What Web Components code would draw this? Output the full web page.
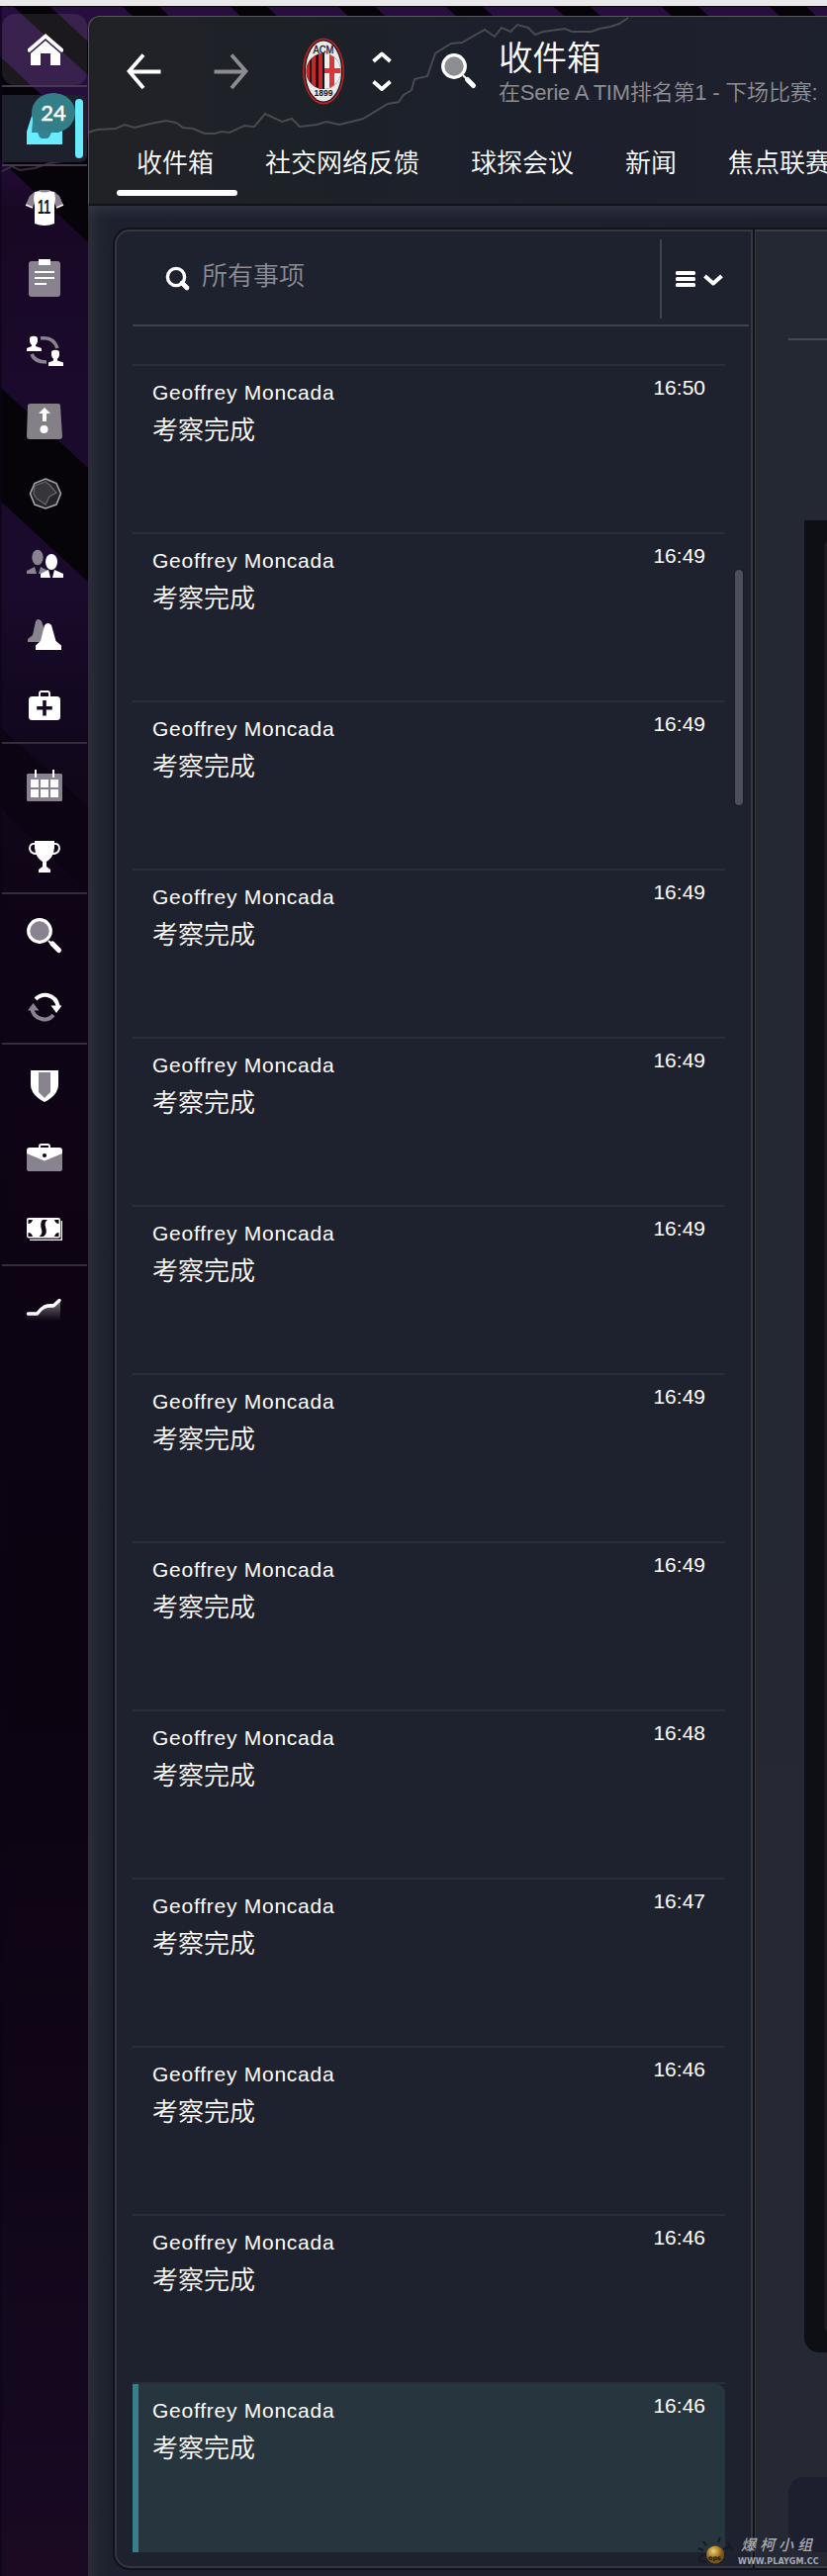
<!DOCTYPE html>
<html lang="zh-CN">
<head>
<meta charset="utf-8">
<title>收件箱</title>
<style>
html,body{margin:0;padding:0;background:#0e0415}
body{width:836px;height:2604px;overflow:hidden;font-family:"Liberation Sans","Noto Sans CJK SC",sans-serif;color:#fff}
</style>
</head>
<body>
<fm-app></fm-app>
<script>
const define = (name, html, setup) => customElements.define(name, class extends HTMLElement {
  connectedCallback() {
    if (this.shadowRoot) return;
    const root = this.attachShadow({mode: 'open'});
    root.innerHTML = typeof html === 'function' ? html(this) : html;
    if (setup) setup(this, root);
  }
});

const G = '#89838f';
const icons = {
  home: `<path d="M31 66V53L46 40 61 53V66H51V54H41V66Z" fill="#fff"/><path d="M46 38 62.500 52" stroke="#33204a" stroke-width="0"/><path d="M28 49.500 46 34 64 49.500V52L62 53 46 39 30 53 28 52Z" fill="#fff"/><path d="M30 54 46 40.300 62 54" fill="none" stroke="#33204a" stroke-width="1.300"/>`,
  shirt: `<path d="M35 194 30 198 26 207 33 210 36 203ZM55 194 60 198 64 207 57 210 54 203Z" fill="${G}"/><path d="M26 207 33 210M64 207 57 210" stroke="#fff" stroke-width="1.5"/><path d="M35 194Q45 191 55 194L56 201 55 207V226Q45 230 35 226V207L34 201Z" fill="#fff"/><path d="M39 193Q45 196 51 193L50 192H40Z" fill="${G}"/><text x="38" y="216" font-family="Liberation Sans" font-weight="700" font-size="20" textLength="13" lengthAdjust="spacingAndGlyphs" fill="#1a1020">11</text>`,
  clipboard: `<rect x="29" y="264" width="32" height="36" rx="3" fill="${G}"/><path d="M39 262h12v6H39zM35 274h20v2H35zM35 280h20v2H35zM35 286h12v2H35z" fill="#fff"/>`,
  swap: `<path d="M41 342Q54 340 58 352M32 358Q35 366 47 366" fill="none" stroke="${G}" stroke-width="3.6"/><g fill="#fff"><path d="M27 355V352L32 350V348C28 340 31 340 34 340S40 340 36 348V350L42 352V355Z"/><ellipse cx="34" cy="344.500" rx="4" ry="4.800"/><path d="M49 370V366.500L54 364.500V362C50 354 53 354 56 354S62 354 58 362V364.500L64 366.500V370Z"/><ellipse cx="56" cy="358.500" rx="4" ry="4.800"/></g>`,
  tactic: `<path d="M31 408H59Q61 408 61 410L63 441Q63 444 60 444H30Q27 444 27 441L28 410Q28 408 31 408Z" fill="#858087"/><path d="M45 412 51 418H47V426H43V418H39Z" fill="#fff"/><circle cx="44.500" cy="434" r="4" fill="#fff"/>`,
  badge: `<path d="M46 484 57 488.500 61.500 499 57 510 46 514 35 510 30.500 499 35 488.500Z" fill="#242328" stroke="#a6a6a9" stroke-width="1.600"/><path d="M35 491 46 487 51 491 57 498 50 502 46 510 37 504 34 499Z" fill="#363539" stroke="#66656a" stroke-width="1.300"/>`,
  people: `<g fill="${G}"><ellipse cx="38" cy="563.500" rx="5.700" ry="7.700"/><path d="M27 580V577L35 573 37 580ZM39 580 41 573 49 577V580Z"/></g><g fill="#fff"><ellipse cx="52" cy="568" rx="6" ry="8"/><path d="M41 584V580L49 576 51 584ZM53 584 55 576 64 580V584Z"/></g>`,
  cones: `<path d="M36 628Q38.500 624 42 628L44 634V649H28V646L33 642Z" fill="${G}"/><path d="M45 632Q48.500 628 52 632L56.500 648 62 652.500V657H36V652.500L41 648Z" fill="#fff"/>`,
  medkit: `<rect x="29" y="704" width="32" height="24" rx="3.500" fill="#fff"/><path d="M40 705V701Q40 699 42 699H48Q50 699 50 701V705" fill="none" stroke="#fff" stroke-width="1.800"/><path d="M43.200 708h3.600v6h6v3.600h-6v6h-3.600v-6h-6v-3.600h6z" fill="#170a24"/>`,
  calendar: `<rect x="27" y="782" width="36" height="28" rx="1.500" fill="${G}"/><path d="M35 778h2v8h-2zM53 778h2v8h-2zM31 788h8v8h-8zM41 788h8v8h-8zM51 788h8v8h-8zM31 798h8v8h-8zM41 798h8v8h-8zM51 798h8v8h-8z" fill="#fff"/>`,
  trophy: `<path d="M35 850H55V857Q54 867 47 871V876L51 879V882H39V879L43 876V871Q36 867 35 857Z" fill="#fff"/><path d="M36 853Q30 852 30 858 31 863 37 863M54 853Q60 852 60 858 59 863 53 863" fill="none" stroke="#fff" stroke-width="1.900"/>`,
  search: `<circle cx="40" cy="941" r="11.300" fill="${G}" stroke="#fff" stroke-width="3.200"/><path d="M49 951 53 955" stroke="#fff" stroke-width="2"/><path d="M53 954 59.500 960.500" stroke="#fff" stroke-width="5.200" stroke-linecap="round"/>`,
  refresh: `<path d="M36 1010Q41 1005 48 1006 57 1008 59 1018" fill="none" stroke="#fff" stroke-width="4"/><path d="M51.500 1016.500H62.500L57 1024Z" fill="#fff"/><path d="M54 1026Q49 1032 42 1030 33 1028 32 1018" fill="none" stroke="${G}" stroke-width="4"/><path d="M28 1021.500H39.500L33.500 1014Z" fill="${G}"/>`,
  shield: `<path d="M31 1082H59V1096Q59 1107 45 1114 31 1107 31 1096Z" fill="#fff"/><path d="M39 1084H51V1104L45 1110 39 1104Z" fill="${G}"/>`,
  briefcase: `<path d="M40 1161V1158.500Q40 1157 42 1157H48Q50 1157 50 1158.500V1161" fill="none" stroke="#fff" stroke-width="1.800"/><path d="M27 1163H63V1182Q63 1184 60 1184H30Q27 1184 27 1182Z" fill="${G}"/><path d="M30 1160H60Q63 1160 63 1163V1166L45 1173.500 27 1166V1163Q27 1160 30 1160Z" fill="#fff"/><circle cx="45" cy="1168" r="2.100" fill="#140a1a"/>`,
  money: `<path d="M30 1253.400H62.300V1234" fill="none" stroke="#fff" stroke-width="1.300"/><rect x="27" y="1231" width="34" height="20.600" rx="2" fill="#fff"/><path d="M28.500 1233H33Q32 1237 28.500 1237ZM59.500 1233H55Q56 1237 59.500 1237ZM28.500 1250H33Q32 1246 28.500 1246ZM59.500 1250H55Q56 1246 59.500 1246ZM43 1233H48Q44.500 1236 46 1240 48.500 1247 44 1250H39.500Q43.500 1247 42 1243 40 1236 43 1233Z" fill="#140a1a"/>`,
  chart: `<defs><linearGradient id="g" x2="0" y2="1"><stop stop-color="#77717d"/><stop offset="1" stop-color="#77717d" stop-opacity="0"/></linearGradient></defs><path d="M27 1328H37L45 1321H54L61 1314V1335H27Z" fill="url(#g)"/><path d="M28.500 1328H37.500Q41 1323 45 1321 49 1319.500 54 1320L60 1314.500" fill="none" stroke="#fff" stroke-width="3.500" stroke-linecap="round" stroke-linejoin="round"/>`
};

define('fm-nav-icon', el => `<style>:host{display:block;height:72px;width:89px}svg{display:block}</style>
<svg width="89" height="72" viewBox="0 ${el.getAttribute('top')} 89 72">${icons[el.getAttribute('name')]}</svg>`);

define('fm-nav-group', `<style>:host{display:block;padding-top:6px}:host::after{content:"";display:block;height:2px;width:86px;margin-left:2px;background:#352d3b}:host([last])::after{display:none}</style><slot></slot>`);

define('fm-sidebar', `<style>
:host{display:block;width:89px;padding-top:8px}
.home{margin-left:2px;width:86px;height:72px;border-radius:13px;background:rgba(255,255,255,.085)}
.home fm-nav-icon{margin-left:-2px}
.line{height:2px;width:86px;margin-left:2px;background:#443a4c}
.inbox{position:relative;margin:8px 0 2px 2px;width:86px;height:68px;border-radius:0 7px 7px 0;background:#1d202d}
.inbox svg{display:block}
.count{position:absolute;left:30px;top:-2px;width:44px;height:40px;border-radius:22px/20px;background:#347f87;text-align:center;font:500 22px/40px Lato,"Liberation Sans",sans-serif;-webkit-text-stroke:.4px #fff;color:#fff}
.active{position:absolute;left:74px;top:4px;width:8px;height:60px;border-radius:4px;background:#68ebff}
</style>
<div class="home"><fm-nav-icon name="home" top="14"></fm-nav-icon></div>
<div class="line"></div>
<div class="inbox"><svg width="86" height="68" viewBox="2 96 86 68"><path d="M33 114H58L63 133V146H27V133Z" fill="#68ebff"/><path d="M34 112H57L60 134H52L50 138Q49 140 47 140H43Q40 140 39 136L38 134H32Z" fill="#347f91"/></svg><div class="count">24</div><div class="active"></div></div>
<div class="line"></div>
<fm-nav-group>${['shirt','clipboard','swap','tactic','badge','people','cones','medkit'].map((n,i)=>`<fm-nav-icon name="${n}" top="${174+i*72}"></fm-nav-icon>`).join('')}</fm-nav-group>
<fm-nav-group><fm-nav-icon name="calendar" top="758"></fm-nav-icon><fm-nav-icon name="trophy" top="830"></fm-nav-icon></fm-nav-group>
<fm-nav-group><fm-nav-icon name="search" top="910"></fm-nav-icon><fm-nav-icon name="refresh" top="982"></fm-nav-icon></fm-nav-group>
<fm-nav-group><fm-nav-icon name="shield" top="1062"></fm-nav-icon><fm-nav-icon name="briefcase" top="1134"></fm-nav-icon><fm-nav-icon name="money" top="1206"></fm-nav-icon></fm-nav-group>
<fm-nav-group last><fm-nav-icon name="chart" top="1286"></fm-nav-icon></fm-nav-group>`);

define('fm-tab', `<style>:host{display:flex;flex:none;flex-direction:column;align-items:center;position:relative;padding:0 26px;font-size:26px;line-height:40px;font-weight:350;white-space:nowrap}
:host([active])::after{content:"";position:absolute;left:6px;right:2px;top:47px;height:6px;border-radius:3px;background:#fff}</style><slot></slot>`);

define('fm-crest', `<style>:host{display:block;width:44px;height:70px}svg{display:block}</style>
<svg width="44" height="70" viewBox="305 37 44 70"><defs><clipPath id="c"><ellipse cx="327" cy="72" rx="17.500" ry="18"/></clipPath></defs>
<ellipse cx="327" cy="72" rx="21" ry="33.500" fill="#b92325"/><ellipse cx="327" cy="72" rx="19.300" ry="31.700" fill="#17151a"/><ellipse cx="327" cy="72" rx="18" ry="30.500" fill="#e9e9ea"/>
<g clip-path="url(#c)"><rect x="308" y="53" width="38" height="38" fill="#17151a"/><path d="M310 53h3v38h-3zM315 53h4v38h-4zM322 53h4v38h-4z" fill="#c5282b"/><path d="M328 53h18v38h-18z" fill="#eee"/><path d="M333 53h5v38h-5zM328 69h18v5h-18z" fill="#dc3639"/></g>
<text x="316.500" y="53.500" font-family="Liberation Sans" font-size="11" textLength="21" lengthAdjust="spacingAndGlyphs" fill="#151519" stroke="#151519" stroke-width=".3">ACM</text>
<text x="317.500" y="96.500" font-family="Liberation Sans" font-weight="700" font-size="8.500" textLength="19" lengthAdjust="spacingAndGlyphs" fill="#151519">1899</text></svg>`);

define('fm-header', `<style>
:host{display:block;box-sizing:border-box;position:relative;height:192px;border-top:1px solid #58595d;border-left:1px solid #58595d;border-top-left-radius:12px;background:linear-gradient(90deg,#212226,#1c2129 35%,#1d202c 65%,#1d212d);border-bottom:2px solid #121318;overflow:hidden}
.graph{position:absolute;left:-1px;top:-1px}
.bar{position:relative;display:flex;height:128px;align-items:flex-start}
.nav{display:block;flex:none}
fm-crest{margin:20px 0 0 0;flex:none}
.titles{margin-left:14px;white-space:nowrap}
h1{margin:19px 0 0;font-size:34.500px;line-height:46px;font-weight:350}
p{margin:0;font-size:22px;line-height:24px;color:#8d8e93;font-weight:350;letter-spacing:-.2px}
nav{position:relative;display:flex;margin-left:22px;width:724px;overflow:visible}
</style>
<svg class="graph" width="747" height="192" viewBox="89 16 747 192"><path d="M89 134 98 131 117 130 126 126 136 129 148 126 157 124 168 122 178 124 185 129 195 130 207 135H217L224 133 232 134 247 127 257 128 268 115 285 123 295 120 303 128 320 126 330 123 343 126 367 120 392 105 403 103 408 96 416 91 419 80 432 77 440 54 456 44 467 43 490 30 500 37 507 28 516 32 523 25 534 28 541 35 549 32 571 29 578 32H598L606 29 617 27 626 24 635 18" fill="none" stroke="#484a50" stroke-width="2"/></svg>
<div class="bar">
<svg class="nav" width="215" height="110" viewBox="90 17 215 110"><path d="M145 55.500 130.500 72 145 89M131 72.500H162.500" fill="none" stroke="#fff" stroke-width="3.800"/><path d="M234 55.500 248.500 72 234 89M248 72.500H216.500" fill="none" stroke="#8c8d91" stroke-width="3.800"/></svg>
<fm-crest></fm-crest>
<svg class="nav" width="141" height="110" viewBox="349 17 141 110"><path d="M377.500 62 386 54.500 394.500 62M377.500 82.500 386 90 394.500 82.500" fill="none" stroke="#fff" stroke-width="3.800" stroke-linejoin="round"/><circle cx="459" cy="67" r="11.300" fill="#8d8e93" stroke="#fff" stroke-width="3.200"/><path d="M468 76 473 81" stroke="#fff" stroke-width="2"/><path d="M472.500 80.500 478.500 86.500" stroke="#fff" stroke-width="5" stroke-linecap="round"/></svg>
<div class="titles"><h1>收件箱</h1><p>在Serie A TIM排名第1 - 下场比赛:</p></div>
</div>
<nav><fm-tab active>收件箱</fm-tab><fm-tab>社交网络反馈</fm-tab><fm-tab>球探会议</fm-tab><fm-tab>新闻</fm-tab><fm-tab>焦点联赛</fm-tab></nav>`);

define('fm-message', `<style>
:host{display:block;box-sizing:border-box;height:170px;width:599px;border-top:2px solid #2a2d3a}
article{display:flex;justify-content:space-between;box-sizing:border-box;height:168px;padding:7px 20px 0;font-size:21px}
:host([selected]) article{height:170px;background:#27353e;border-radius:0 9px 0 0;border-left:6px solid #36808a;padding-left:14px}
:host([selected]){height:172px}
.name{line-height:26px;margin-top:7px;letter-spacing:.75px}
.subject{font-size:26px;line-height:38px;margin-top:6px;font-weight:350}
time{line-height:26px;margin-top:2px}
</style><article><div><div class="name"><slot name="from"></slot></div><div class="subject"><slot></slot></div></div><time><slot name="time"></slot></time></article>`);

define('fm-search', `<style>
:host{display:flex;box-sizing:border-box;align-items:center;height:96px;border-bottom:2px solid #3f424d;width:623px}
svg{display:block;flex:none}
.q{font-size:26px;line-height:40px;color:#8b8d93;font-weight:350;flex:1;margin-top:-5px}
.sep{width:2px;height:80px;background:#41434e;align-self:flex-start;margin-top:8px}
</style><svg width="70" height="94" viewBox="134 234 70 94"><circle cx="178" cy="280" r="8.600" fill="none" stroke="#fff" stroke-width="3.400"/><path d="M184 286 189 291" stroke="#fff" stroke-width="4.600" stroke-linecap="round"/></svg>
<div class="q">所有事项</div><div class="sep"></div>
<svg width="88" height="94" viewBox="669 234 88 94"><g fill="#fff"><rect x="683" y="274" width="20" height="4" rx="1.500"/><rect x="683" y="280" width="20" height="4" rx="1.500"/><rect x="683" y="286" width="20" height="4" rx="1.500"/></g><path d="M712.500 279 721 286.500 729.500 279" fill="none" stroke="#fff" stroke-width="4" stroke-linejoin="round"/></svg>`);

const times = ['16:50','16:49','16:49','16:49','16:49','16:49','16:49','16:49','16:48','16:47','16:46','16:46','16:46'];
define('fm-inbox', `<style>
:host{display:block;position:relative;box-sizing:border-box;flex:none;width:645px;height:2364px;background:#1e212e;border:2px solid #343742;border-top-left-radius:15px;border-bottom-left-radius:15px;box-shadow:0 0 0 2px #111319;padding-left:16px;margin:2px 0 0 2px}
.list{display:flex;flex-direction:column;margin-top:38px}
.scroll{position:absolute;left:625px;top:342px;width:8px;height:238px;border-radius:4px;background:#4d4f5a;box-shadow:0 0 0 1px #191b27}
</style><fm-search></fm-search><div class="list">${times.map((t,i)=>`<fm-message ${i===12?'selected':''}><span slot="from">Geoffrey Moncada</span>考察完成<span slot="time">${t}</span></fm-message>`).join('')}</div><div class="scroll"></div>`);

define('fm-reader', `<style>
:host{display:block;box-sizing:border-box;flex:1;height:2364px;margin:2px 0 0 0;background:linear-gradient(#242832,#242832 30%,#262933);border-top:2px solid #3b3e47;border-bottom:2px solid #3b3e47;border-left:1px solid #353841;box-shadow:0 0 0 2px #111319;overflow:hidden}
.line{height:2px;background:#464852;margin:108px 0 0 33px}
.body{box-sizing:border-box;height:1852px;margin:182px 0 126px 49px;background:#0e0f14;border-bottom-left-radius:15px;padding:22px 0 22px 20px}
.body i{display:block;height:100%;background:#1b1a1e;border-radius:9px 0 0 9px}
.foot{height:76px;margin-left:33px;border-radius:16px 0 0 16px;background:#1d1f2e}
</style><div class="line"></div><div class="body"><i></i></div><div class="foot"></div>`);

define('fm-watermark', `<style>
:host{position:absolute;left:704px;top:2562px;width:126px;height:32px;display:flex;color:#a9aab2}
svg{flex:none}
div{margin-left:2px;white-space:nowrap}
b{display:block;font:italic 500 15px/20px "Noto Sans CJK SC",sans-serif;letter-spacing:4px;margin-left:3px}
small{display:block;font:700 8px/10px "DejaVu Sans",sans-serif;width:81px;letter-spacing:.1px;margin-top:3px}
</style><svg width="40" height="32" viewBox="704 2562 40 32"><defs><radialGradient id="b" cx=".4" cy=".3"><stop stop-color="#ddd394"/><stop offset=".5" stop-color="#c2932f"/><stop offset="1" stop-color="#7e561b"/></radialGradient></defs><path d="M711 2569 714 2573M728 2565 726 2570M706 2576 711 2578M731 2577 739 2574M735 2570 740 2577M714 2582Q706 2583 707 2588 709 2591 715 2589" fill="none" stroke="#151a22" stroke-width="2"/><circle cx="723" cy="2582.500" r="9" fill="url(#b)"/><text x="716" y="2588" font-family="DejaVu Sans" font-weight="700" font-size="6.500" fill="#151515">ops</text></svg><div><b>爆柯小组</b><small>WWW.PLAYGM.CC</small></div>`);

define('fm-app', `<style>
:host{display:block;position:relative;width:836px;height:2604px;overflow:hidden;background:#e9e9e9;padding-top:6px;box-sizing:border-box}
.bg{position:absolute;left:0;top:6px}
.shell{position:relative;display:grid;grid-template-columns:89px 1fr;height:2598px}
main{padding-top:10px;min-width:0}
.content{display:flex;gap:2px;height:2396px;box-sizing:border-box;padding:22px 0 0 25px;background:linear-gradient(rgba(54,58,74,.55),transparent 14px),linear-gradient(90deg,#2b2e38,#20242f 11px,#1d202e 25px,#1d1f2d)}
</style>
<svg class="bg" width="836" height="2598" viewBox="0 6 836 2598"><defs><linearGradient id="p" gradientUnits="userSpaceOnUse" x1="0" y1="6" x2="0" y2="2604"><stop stop-color="#270e3e"/><stop offset=".05" stop-color="#260e3d"/><stop offset=".08" stop-color="#180825"/><stop offset=".16" stop-color="#1b0a2c"/><stop offset=".23" stop-color="#1a0a2b"/><stop offset=".27" stop-color="#130820"/><stop offset=".31" stop-color="#110719"/><stop offset=".36" stop-color="#0e0415"/><stop offset=".65" stop-color="#0c0311"/><stop offset=".83" stop-color="#100618"/><stop offset=".96" stop-color="#160921"/><stop offset="1" stop-color="#1b0a22"/></linearGradient></defs>
<rect y="6" width="836" height="2598" fill="url(#p)"/>
<path d="M14 7H51L89 42V76ZM0 57 89 140V245L0 161ZM0 391 89 473V588L0 506Z" fill="#060309"/><path d="M0 735 89 815V900L0 818Z" fill="#0c0412"/>
<path d="M123 6h37l11 10h-37zM232 6h37l11 10h-37zM341 6h37l11 10h-37zM450 6h37l11 10h-37zM559 6h37l11 10h-37zM668 6h37l11 10h-37zM777 6h37l11 10h-37z" fill="#060309"/>
<path d="M0 174Q8 170 12 168L20 172 35 170 50 165 65 163" fill="none" stroke="#3b2b43" stroke-width="2"/><path d="M0 6h836v1H0z" fill="#08060c"/><path d="M0 7h2v2597H0z" fill="#0a0518" opacity=".6"/></svg>
<div class="shell"><fm-sidebar></fm-sidebar><main><fm-header></fm-header><div class="content"><fm-inbox></fm-inbox><fm-reader></fm-reader></div></main></div>
<fm-watermark></fm-watermark>`);
</script>
</body>
</html>
